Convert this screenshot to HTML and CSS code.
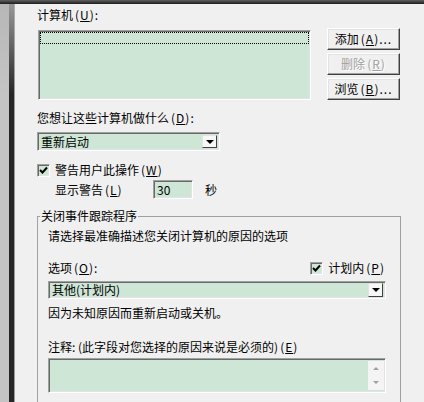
FILE: index.html
```html
<!DOCTYPE html>
<html lang="zh-CN">

<head>
  <meta charset="UTF-8">
  <meta name="viewport" content="width=device-width, initial-scale=1.0">
  <title>远程关机对话框</title>
  <link rel="stylesheet" href="styles.css">
</head>

<body>
  <div class="frame-top"></div>
  <div class="window">
    <div class="frame-left"></div>

    <div class="dialog">

      <!-- computer list + side buttons -->
      <div class="computers">
        <div class="computers-main">
          <label class="text">计算机<span class="key">(<u>U</u>):</span></label>
          <div class="listbox">
            <div class="list-focus"></div>
          </div>
        </div>
        <div class="side-buttons">
          <button type="button" class="btn">添加<span class="key">(<u>A</u>)...</span></button>
          <button type="button" class="btn" disabled>删除<span class="key">(<u>R</u>)</span></button>
          <button type="button" class="btn">浏览<span class="key">(<u>B</u>)...</span></button>
        </div>
      </div>

      <label class="text action-label">您想让这些计算机做什么<span class="key">(<u>D</u>):</span></label>
      <div class="combo action-combo">
        <span class="combo-value">重新启动</span>
        <span class="combo-arrow"></span>
      </div>

      <div class="check-row warn-row">
        <span class="checkbox">
          <svg width="9" height="9" viewBox="0 0 9 9"><path d="M1 4 L3.5 6.5 L8 1.5" fill="none" stroke="#000" stroke-width="2"/></svg>
        </span>
        <span class="text">警告用户此操作<span class="key">(<u>W</u>)</span></span>
      </div>

      <div class="delay-row">
        <span class="text delay-label">显示警告<span class="key">(<u>L</u>)</span></span>
        <span class="field delay-input">30</span>
        <span class="text delay-unit">秒</span>
      </div>

      <fieldset class="tracker">
        <legend>关闭事件跟踪程序</legend>

        <div class="text">请选择最准确描述您关闭计算机的原因的选项</div>

        <div class="option-row">
          <span class="text">选项<span class="key">(<u>O</u>):</span></span>
          <span class="check-row">
            <span class="checkbox">
              <svg width="9" height="9" viewBox="0 0 9 9"><path d="M1 4 L3.5 6.5 L8 1.5" fill="none" stroke="#000" stroke-width="2"/></svg>
            </span>
            <span class="text">计划内<span class="key">(<u>P</u>)</span></span>
          </span>
        </div>

        <div class="combo reason-combo">
          <span class="combo-value">其他(计划内)</span>
          <span class="combo-arrow"></span>
        </div>

        <div class="text reason-note">因为未知原因而重新启动或关机。</div>

        <div class="text comment-label">注释: (此字段对您选择的原因来说是必须的)<span class="key">(<u>E</u>)</span></div>
        <div class="field comment-box">
          <span class="comment-text"></span>
          <span class="scrollbar">
            <span class="scroll-up"></span>
            <span class="scroll-down"></span>
          </span>
        </div>
      </fieldset>

    </div>
  </div>
</body>

</html>
```

FILE: styles.css
```css
* {
  box-sizing: border-box;
}

html,
body {
  margin: 0;
}

body {
  width: 424px;
  height: 402px;
  overflow: hidden;
  background: #f0f0f0;
  font-family: "Noto Sans CJK SC", "Liberation Sans", sans-serif;
  font-size: 12px;
  line-height: 14px;
  color: #000;
}

u {
  text-decoration: underline;
}

/* mnemonic part, half-width chars are wider in the dialog font */
.key {
  margin-left: 2px;
  letter-spacing: 1px;
}

/* window frame */
.frame-top {
  height: 4px;
  background: linear-gradient(#606060, #1c1c1c);
}

.window {
  display: flex;
  height: 398px;
}

.frame-left {
  width: 15px;
  flex: none;
  background:
    linear-gradient(to bottom, rgba(180, 180, 180, 0.8), rgba(180, 180, 180, 0) 90px),
    linear-gradient(to right, #c4c4c4 0 9px, #262626 9px 14px, #9a9a9a 14px);
}

.dialog {
  width: 386px;
  padding: 4px 0 0 22px;
}

.text {
  display: block;
  white-space: nowrap;
}

/* sunken field */
.listbox,
.combo,
.field,
.checkbox {
  background: #cde6d5;
  border: 1px solid;
  border-color: #a0a0a0 #fff #fff #a0a0a0;
  box-shadow: inset 1px 1px #696969, inset -1px -1px #e3e3e3;
}

/* computers */
.computers {
  display: flex;
}

.computers-main {
  width: 274px;
}

.listbox {
  margin: 8px 0 0 1px;
  width: 273px;
  height: 70px;
  padding: 1px;
}

.list-focus {
  height: 12px;
  border: 1px dotted #000;
}

.side-buttons {
  display: flex;
  flex-direction: column;
  gap: 3px;
  margin: 20px 0 0 16px;
}

.btn {
  width: 73px;
  height: 22px;
  padding: 0;
  font: inherit;
  color: #000;
  background: #f0f0f0;
  border: 1px solid;
  border-color: #fff #404040 #404040 #fff;
  box-shadow: inset -1px -1px #a0a0a0, inset 1px 1px #e3e3e3;
}

.btn:disabled {
  color: #a0a0a0;
  text-shadow: 1px 1px #fff;
}

/* action */
.action-label {
  margin-top: 11px;
}

.combo {
  display: flex;
  align-items: stretch;
  padding: 2px 2px 2px 3px;
}

.combo-value {
  flex: 1;
  line-height: 14px;
}

.combo-arrow {
  width: 15px;
  flex: none;
  display: flex;
  align-items: center;
  justify-content: center;
  background: #f7f7f7;
  border: 1px solid;
  border-color: #e3e3e3 #404040 #404040 #e3e3e3;
}

.combo-arrow::after {
  content: "";
  border-left: 4px solid transparent;
  border-right: 4px solid transparent;
  border-top: 4px solid #000;
}

.action-combo {
  margin-top: 7px;
  width: 183px;
  height: 19px;
}

/* warning */
.check-row {
  display: flex;
  align-items: center;
  gap: 5px;
}

.checkbox {
  width: 13px;
  height: 13px;
  flex: none;
  display: flex;
  align-items: center;
  justify-content: center;
  padding-top: 1px;
}

.warn-row {
  margin-top: 12px;
  height: 14px;
}

.delay-row {
  display: flex;
  align-items: center;
  margin-top: 3px;
  height: 19px;
  padding-left: 18px;
}

.delay-label {
  width: 98px;
}

.field {
  display: block;
}

.delay-input {
  width: 40px;
  height: 19px;
  padding: 2px 0 0 3px;
}

.delay-unit {
  margin-left: 12px;
}

/* shutdown event tracker */
.tracker {
  margin: 10px 0 0;
  width: 364px;
  padding: 6px 14px 30px 10px;
  border: 1px solid #a0a0a0;
}

.tracker legend {
  margin-left: -8px;
  padding: 0 1px;
  line-height: 14px;
}

.option-row {
  display: flex;
  justify-content: space-between;
  align-items: center;
  margin-top: 18px;
  height: 14px;
  padding-right: 1px;
}

.reason-combo {
  margin-top: 6px;
  height: 18px;
  padding-top: 1px;
  padding-bottom: 1px;
}

.reason-note {
  margin-top: 7px;
}

.comment-label {
  margin-top: 20px;
}

.comment-box {
  display: flex;
  margin-top: 4px;
  height: 35px;
  padding: 2px 1px 2px 2px;
}

.comment-text {
  flex: 1;
}

.scrollbar {
  width: 16px;
  display: flex;
  flex-direction: column;
  justify-content: space-between;
  background: #f4f4f4;
}

.scroll-up,
.scroll-down {
  height: 15px;
  display: flex;
  align-items: center;
  justify-content: center;
}

.scroll-up::after {
  content: "";
  border-left: 3px solid transparent;
  border-right: 3px solid transparent;
  border-bottom: 3px solid #a0a0a0;
}

.scroll-down::after {
  content: "";
  border-left: 3px solid transparent;
  border-right: 3px solid transparent;
  border-top: 3px solid #a0a0a0;
}
```
